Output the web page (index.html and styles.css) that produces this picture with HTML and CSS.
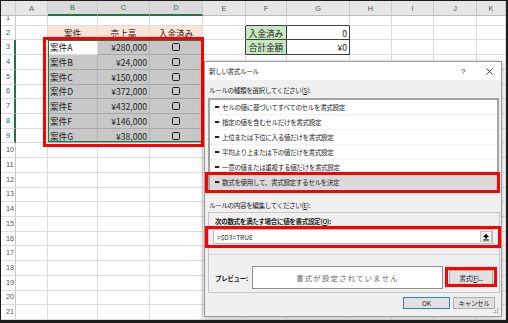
FILE: index.html
```html
<!DOCTYPE html>
<html lang="ja">
<head>
<meta charset="utf-8">
<title>新しい書式ルール</title>
<link rel="stylesheet" href="styles.css">
</head>
<body>
<div class="frame">
  <div class="sheet">
    <div class="corner"></div>
    <div class="ch">A</div><div class="ch on">B</div><div class="ch on">C</div><div class="ch on">D</div><div class="ch">E</div><div class="ch">F</div><div class="ch">G</div><div class="ch">H</div><div class="ch">I</div><div class="ch">J</div><div class="ch">K</div>

    <div class="rh r1">1</div><div></div><div></div><div></div><div></div><div></div><div class="bt"></div><div class="bt"></div><div></div><div></div><div></div><div></div>

    <div class="rh">2</div><div></div><div class="hd">案件</div><div class="hd">売上高</div><div class="hd">入金済み</div><div class="bl"></div><div class="lab">入金済み</div><div class="val">0</div><div></div><div></div><div></div><div></div>

    <div class="rh on">3</div><div></div><div class="act">案件A</div><div class="sel num">¥280,000</div><div class="sel ctr"><span class="box"></span></div><div class="bl"></div><div class="lab">合計金額</div><div class="val">¥0</div><div></div><div></div><div></div><div></div>

    <div class="rh on">4</div><div></div><div class="sel">案件B</div><div class="sel num">¥24,000</div><div class="sel ctr"><span class="box"></span></div><div></div><div></div><div></div><div></div><div></div><div></div><div></div>

    <div class="rh on">5</div><div></div><div class="sel">案件C</div><div class="sel num">¥150,000</div><div class="sel ctr"><span class="box"></span></div><div></div><div></div><div></div><div></div><div></div><div></div><div></div>

    <div class="rh on">6</div><div></div><div class="sel">案件D</div><div class="sel num">¥372,000</div><div class="sel ctr"><span class="box"></span></div><div></div><div></div><div></div><div></div><div></div><div></div><div></div>

    <div class="rh on">7</div><div></div><div class="sel">案件E</div><div class="sel num">¥432,000</div><div class="sel ctr"><span class="box"></span></div><div></div><div></div><div></div><div></div><div></div><div></div><div></div>

    <div class="rh on">8</div><div></div><div class="sel">案件F</div><div class="sel num">¥146,000</div><div class="sel ctr"><span class="box"></span></div><div></div><div></div><div></div><div></div><div></div><div></div><div></div>

    <div class="rh on">9</div><div></div><div class="sel">案件G</div><div class="sel num">¥38,000</div><div class="sel ctr"><span class="box"></span></div><div></div><div></div><div></div><div></div><div></div><div></div><div></div>

    <div class="rh">10</div><div></div><div></div><div></div><div></div><div></div><div></div><div></div><div></div><div></div><div></div><div></div>
    <div class="rh">11</div><div></div><div></div><div></div><div></div><div></div><div></div><div></div><div></div><div></div><div></div><div></div>
    <div class="rh">12</div><div></div><div></div><div></div><div></div><div></div><div></div><div></div><div></div><div></div><div></div><div></div>
    <div class="rh">13</div><div></div><div></div><div></div><div></div><div></div><div></div><div></div><div></div><div></div><div></div><div></div>
    <div class="rh">14</div><div></div><div></div><div></div><div></div><div></div><div></div><div></div><div></div><div></div><div></div><div></div>
    <div class="rh">15</div><div></div><div></div><div></div><div></div><div></div><div></div><div></div><div></div><div></div><div></div><div></div>
    <div class="rh">16</div><div></div><div></div><div></div><div></div><div></div><div></div><div></div><div></div><div></div><div></div><div></div>
    <div class="rh">17</div><div></div><div></div><div></div><div></div><div></div><div></div><div></div><div></div><div></div><div></div><div></div>
    <div class="rh">18</div><div></div><div></div><div></div><div></div><div></div><div></div><div></div><div></div><div></div><div></div><div></div>
    <div class="rh">19</div><div></div><div></div><div></div><div></div><div></div><div></div><div></div><div></div><div></div><div></div><div></div>
    <div class="rh">20</div><div></div><div></div><div></div><div></div><div></div><div></div><div></div><div></div><div></div><div></div><div></div>
    <div class="rh">21</div><div></div><div></div><div></div><div></div><div></div><div></div><div></div><div></div><div></div><div></div><div></div>

    <div class="selbox"></div>
    <div class="redbox"></div>
  </div>

  <div class="dialog">
    <div class="titlebar">
      <span class="title">新しい書式ルール</span>
      <span class="help">?</span>
      <span class="close"><svg width="7" height="7" viewBox="0 0 7 7"><path d="M0.5 0.5 L6.5 6.5 M6.5 0.5 L0.5 6.5" stroke="#333" stroke-width="0.9" fill="none"/></svg></span>
    </div>
    <div class="dbody">
      <div class="lbl">ルールの種類を選択してください(<u>S</u>):</div>
      <div class="list">
        <div class="item"><i class="arr"></i>セルの値に基づいてすべてのセルを書式設定</div>
        <div class="item"><i class="arr"></i>指定の値を含むセルだけを書式設定</div>
        <div class="item"><i class="arr"></i>上位または下位に入る値だけを書式設定</div>
        <div class="item"><i class="arr"></i>平均より上または下の値だけを書式設定</div>
        <div class="item"><i class="arr"></i>一意の値または重複する値だけを書式設定</div>
        <div class="item sel"><i class="arr"></i>数式を使用して、書式設定するセルを決定</div>
      </div>
      <div class="lbl l2">ルールの内容を編集してください(<u>E</u>):</div>
      <div class="group">
        <div class="glbl">次の数式を満たす場合に値を書式設定(<u>O</u>):</div>
        <div class="formula">
          <span class="ftext">=$D3=TRUE</span>
          <span class="collapse"><svg width="8" height="8" viewBox="0 0 8 8"><path d="M4 0.8 L7 4 H5.2 V5.6 H2.8 V4 H1 Z" fill="#111"/><rect x="1.2" y="6.4" width="5.6" height="1.1" fill="#111"/></svg></span>
        </div>
        <div class="sep"></div>
        <div class="prow">
          <span class="plbl">プレビュー:</span>
          <div class="pbox">書式が設定されていません</div>
          <div class="btn fmt">書式(<u>F</u>)...</div>
        </div>
      </div>
      <div class="btns">
        <div class="btn ok">OK</div>
        <div class="btn cancel">キャンセル</div>
      </div>
    </div>
    <svg class="grip" width="6" height="6" viewBox="0 0 6 6"><rect x="4" y="0" width="1.2" height="1.2" fill="#9a9a9a"/><rect x="2" y="2" width="1.2" height="1.2" fill="#9a9a9a"/><rect x="4" y="2" width="1.2" height="1.2" fill="#9a9a9a"/><rect x="0" y="4" width="1.2" height="1.2" fill="#9a9a9a"/><rect x="2" y="4" width="1.2" height="1.2" fill="#9a9a9a"/><rect x="4" y="4" width="1.2" height="1.2" fill="#9a9a9a"/></svg>
  </div>
</div>
</body>
</html>
```

FILE: styles.css
```css
html, body {
  margin: 0;
  padding: 0;
  background: #fff;
}
body {
  font-family: "Noto Sans CJK JP", "Noto Sans", sans-serif;
}
.frame {
  position: relative;
  width: 508px;
  height: 323px;
  box-sizing: border-box;
  border: 1px solid #1c1c1c;
  border-right-width: 2px;
  border-bottom-width: 3px;
  overflow: hidden;
  background: #fff;
}

/* ---------- sheet ---------- */
.sheet {
  position: relative;
  display: grid;
  grid-template-columns: 15px 32px 50px 52px 53px 43px 41px 63px 42px 42px 43px 1fr;
  grid-template-rows: 15px 9.7px repeat(20, 14.73px);
  font-size: 8.6px;
  color: #222;
}
.sheet > div {
  box-sizing: border-box;
  border-right: 1px solid #dcdcdc;
  border-bottom: 1px solid #dcdcdc;
  display: flex;
  align-items: center;
  padding: 0 2px;
  overflow: hidden;
  white-space: nowrap;
  min-width: 0;
}
.sheet > .corner,
.sheet > .ch {
  background: #e6e6e6;
  border-right-color: #cacaca;
  border-bottom-color: #bdbdbd;
}
.sheet > .ch {
  justify-content: center;
  font-size: 7.4px;
  color: #555;
  font-family: "Liberation Sans", sans-serif;
}
.sheet > .ch.on {
  color: #217346;
  background: #dadada;
  border-bottom: 2px solid #217346;
}
.sheet > .rh {
  font-size: 7.4px;
  line-height: 14px;
  color: #555;
  padding-left: 5px;
  border-right-color: #c8c8c8;
  font-family: "Liberation Sans", sans-serif;
}
.sheet > .rh.on {
  color: #217346;
  border-right: 2px solid #217346;
}
.sheet > .r1 {
  align-items: flex-end;
}
.sheet > .hd {
  background: #fbe3d6;
  justify-content: center;
}
.sheet > .sel {
  background: #c8c8c8;
  border-bottom-color: #a9a9a9;
  border-right-color: #b5b5b5;
}
.sheet > .act {
  background: #fff;
}
.sheet > .num {
  justify-content: flex-end;
}
.sheet > .ctr {
  justify-content: center;
}
.sheet > .lab {
  background: #c8e8c2;
  justify-content: center;
  border-right-color: #3f3f3f;
  border-bottom-color: #3f3f3f;
}
.sheet > .val {
  justify-content: flex-end;
  border-right-color: #3f3f3f;
  border-bottom-color: #3f3f3f;
}
.sheet > .bl {
  border-right-color: #3f3f3f;
}
.sheet > .bt {
  border-bottom-color: #3f3f3f;
}
.box {
  width: 8px;
  height: 8px;
  box-sizing: border-box;
  border: 1.5px solid #1a1a1a;
  border-radius: 1.5px;
}
/* overlays: absolutely positioned within the B3:D9 grid area */
.sheet > .selbox,
.sheet > .redbox {
  position: absolute;
  grid-column: 3 / 6;
  grid-row: 4 / 11;
  padding: 0;
  background: transparent;
}
.sheet > .selbox {
  inset: 0 1px 1px 0;
  border: 1px solid #217346;
  z-index: 1;
}
.sheet > .redbox {
  top: -3px;
  right: -1px;
  bottom: -4px;
  left: -5px;
  border: 3px solid #f00;
  z-index: 2;
}

/* ---------- dialog ---------- */
.dialog {
  position: absolute;
  left: 203px;
  top: 60px;
  width: 298px;
  height: 256px;
  box-sizing: border-box;
  border: 1px solid #9b9b9b;
  background: #f0f0f0;
  box-shadow: 0 1px 5px rgba(0, 0, 0, 0.3);
  display: flex;
  flex-direction: column;
  font-size: 6.6px;
  letter-spacing: -0.4px;
  color: #1e1e1e;
  z-index: 5;
  white-space: nowrap;
}
.titlebar {
  flex: none;
  height: 18px;
  background: #fff;
  display: flex;
  align-items: center;
  padding-left: 4px;
}
.title {
  flex: 1;
}
.help {
  width: 12px;
  text-align: center;
  font-family: "Liberation Sans", sans-serif;
  font-size: 8px;
  color: #333;
  margin-right: 13px;
}
.close {
  width: 14px;
  margin-right: 5px;
  display: flex;
  justify-content: center;
}
.dbody {
  flex: 1;
  display: flex;
  flex-direction: column;
  padding: 0 1px 0 3px;
}
.lbl {
  margin-top: 5px;
  height: 10px;
  line-height: 10px;
  padding-left: 1px;
}
.lbl.l2 {
  margin-top: 7px;
}
.list {
  margin-top: 3px;
  margin-right: 1px;
  height: 95px;
  box-sizing: border-box;
  border: 2px solid #a3a3a3;
  background: #fff;
}
.item {
  position: relative;
  height: 15px;
  box-sizing: border-box;
  display: flex;
  align-items: center;
  padding-left: 5px;
  border-bottom: 1px solid #f1f1f1;
}
.item.sel {
  background: #dadada;
}
.item.sel::after {
  content: "";
  position: absolute;
  left: -5px;
  right: -3px;
  top: -3px;
  bottom: -4px;
  border: 3px solid #f00;
}
.arr {
  display: inline-block;
  width: 5px;
  height: 3px;
  margin-right: 2px;
  background: #222;
  clip-path: polygon(0 20%, 55% 20%, 55% 0, 100% 50%, 55% 100%, 55% 80%, 0 80%);
}
.group {
  margin-top: 2px;
  height: 81px;
  box-sizing: border-box;
  border: 1px solid #c5c5c5;
  display: flex;
  flex-direction: column;
}
.glbl {
  margin-top: 3px;
  height: 10px;
  line-height: 10px;
  padding-left: 6px;
  font-weight: bold;
}
.formula {
  position: relative;
  margin: 3px 6px 0 4px;
  height: 15px;
  box-sizing: border-box;
  border: 1px solid #bcbcbc;
  background: #fff;
  display: flex;
  align-items: center;
  padding-left: 3px;
}
.formula::after {
  content: "";
  position: absolute;
  left: -9px;
  right: -9px;
  top: -4px;
  bottom: -5px;
  border: 3px solid #f00;
}
.ftext {
  flex: 1;
  letter-spacing: 0;
}
.collapse {
  width: 12px;
  height: 11px;
  box-sizing: border-box;
  border: 1px solid #c4c4c4;
  background: #f4f4f4;
  display: flex;
  align-items: center;
  justify-content: center;
}
.sep {
  flex: none;
  margin-top: 10px;
  height: 1px;
  background: #d0d0d0;
}
.prow {
  margin-top: 11px;
  height: 23px;
  display: flex;
  align-items: center;
  padding-left: 6px;
}
.plbl {
  flex: none;
  width: 37px;
  font-weight: bold;
}
.pbox {
  flex: none;
  width: 191px;
  height: 23px;
  box-sizing: border-box;
  border: 1px solid #8e8e8e;
  background: #fff;
  display: flex;
  align-items: center;
  justify-content: center;
  color: #6b6b6b;
  font-size: 7.4px;
  letter-spacing: 1.2px;
}
.btn {
  box-sizing: border-box;
  border: 1px solid #adadad;
  background: #e1e1e1;
  display: flex;
  align-items: center;
  justify-content: center;
}
.fmt {
  flex: none;
  position: relative;
  margin-left: 6px;
  width: 44px;
  height: 15px;
}
.fmt::after {
  content: "";
  position: absolute;
  left: -5px;
  right: -5px;
  top: -4px;
  bottom: -3px;
  border: 3px solid #f00;
}
.btns {
  margin-top: 4px;
  height: 12px;
  display: flex;
  justify-content: flex-end;
  gap: 3px;
  padding-right: 5px;
}
.ok {
  width: 47px;
  border-color: #2f7fd0;
  letter-spacing: 0;
}
.cancel {
  width: 42px;
}
.grip {
  position: absolute;
  right: 2px;
  bottom: 2px;
}
```
